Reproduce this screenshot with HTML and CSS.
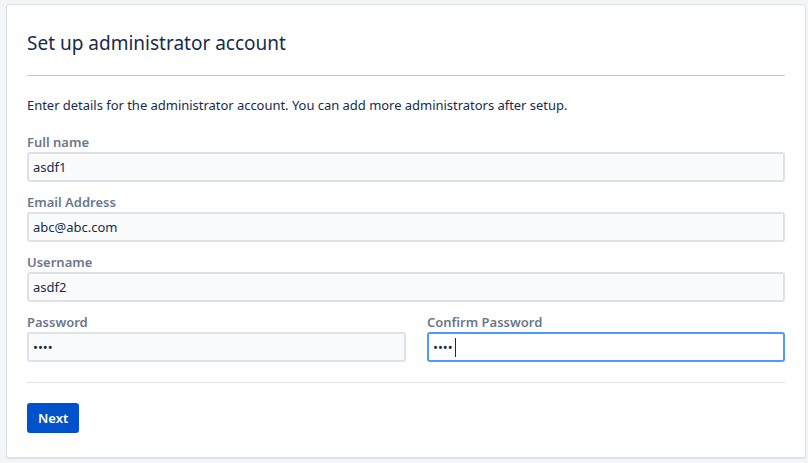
FILE: index.html
```html
<!DOCTYPE html>
<html lang="en">
<head>
<meta charset="utf-8">
<title>Set up administrator account</title>
<link rel="stylesheet" href="styles.css">
</head>
<body>
<div class="card">
  <div class="card-header">
    <h1 class="title">Set up administrator account</h1>
  </div>
  <p class="intro">Enter details for the administrator account. You can add more administrators after setup.</p>
  <form class="form">
    <div class="field">
      <label class="label" for="fullname">Full name</label>
      <input class="input" id="fullname" type="text" value="asdf1">
    </div>
    <div class="field">
      <label class="label" for="email">Email Address</label>
      <input class="input" id="email" type="text" value="abc@abc.com">
    </div>
    <div class="field">
      <label class="label" for="username">Username</label>
      <input class="input" id="username" type="text" value="asdf2">
    </div>
    <div class="field-row">
      <div class="field">
        <label class="label" for="password">Password</label>
        <input class="input" id="password" type="password" value="asdf">
      </div>
      <div class="field">
        <label class="label" for="confirm">Confirm Password</label>
        <div class="input-wrap">
          <input class="input input-focus" id="confirm" type="password" value="asdf">
          <span class="caret"></span>
        </div>
      </div>
    </div>
    <div class="actions">
      <button class="btn-primary" type="button">Next</button>
    </div>
  </form>
</div>
</body>
</html>
```

FILE: styles.css
```css
html, body {
  margin: 0;
  padding: 0;
}
body {
  background: #f4f5f7;
  font-family: "Noto Sans", "Open Sans", "Liberation Sans", sans-serif;
  color: #172b4d;
  padding: 4px 2px 5px 6px;
}
.card {
  background: #ffffff;
  border: 1px solid #dfe1e6;
  border-radius: 3px;
  box-shadow: 0 1px 1px rgba(9, 30, 66, 0.08);
  padding: 0 20px 23px 20px;
  height: 454px;
  box-sizing: border-box;
}
.card-header {
  padding-top: 24px;
  padding-bottom: 18px;
  border-bottom: 1px solid #c1c7d0;
}
.title {
  margin: 0;
  font-size: 19px;
  line-height: 28px;
  font-weight: 400;
  color: #172b4d;
}
.intro {
  margin: 20px 0 18px;
  font-size: 13px;
  line-height: 18px;
  letter-spacing: -0.03px;
  color: #172b4d;
}
.form {
  display: flex;
  flex-direction: column;
}
.field {
  display: flex;
  flex-direction: column;
  margin-bottom: 10px;
}
.label {
  font-size: 13px;
  line-height: 20px;
  font-weight: 600;
  color: #6b778c;
}
.input {
  box-sizing: border-box;
  height: 30px;
  border: 2px solid #dfe1e6;
  border-radius: 3px;
  background: #fafbfc;
  padding: 0 4px;
  font-family: inherit;
  font-size: 13px;
  color: #172b4d;
  outline: none;
  width: 100%;
}
.input-focus,
.input:focus {
  border-color: #4c9aff;
  background: #ffffff;
}
.input-wrap {
  position: relative;
}
.caret {
  position: absolute;
  left: 28px;
  top: 6px;
  width: 1px;
  height: 19px;
  background: #172b4d;
}
.field-row {
  display: grid;
  grid-template-columns: 379px 1fr;
  column-gap: 21px;
}
.field-row .field {
  margin-bottom: 0;
}
.actions {
  margin-top: 20px;
  border-top: 1px solid #dfe1e6;
  padding-top: 20px;
}
.btn-primary {
  height: 30px;
  padding: 0 11px;
  background: #0052cc;
  color: #ffffff;
  border: none;
  border-radius: 3px;
  font-family: inherit;
  font-size: 13px;
  font-weight: 600;
  cursor: pointer;
}
```
